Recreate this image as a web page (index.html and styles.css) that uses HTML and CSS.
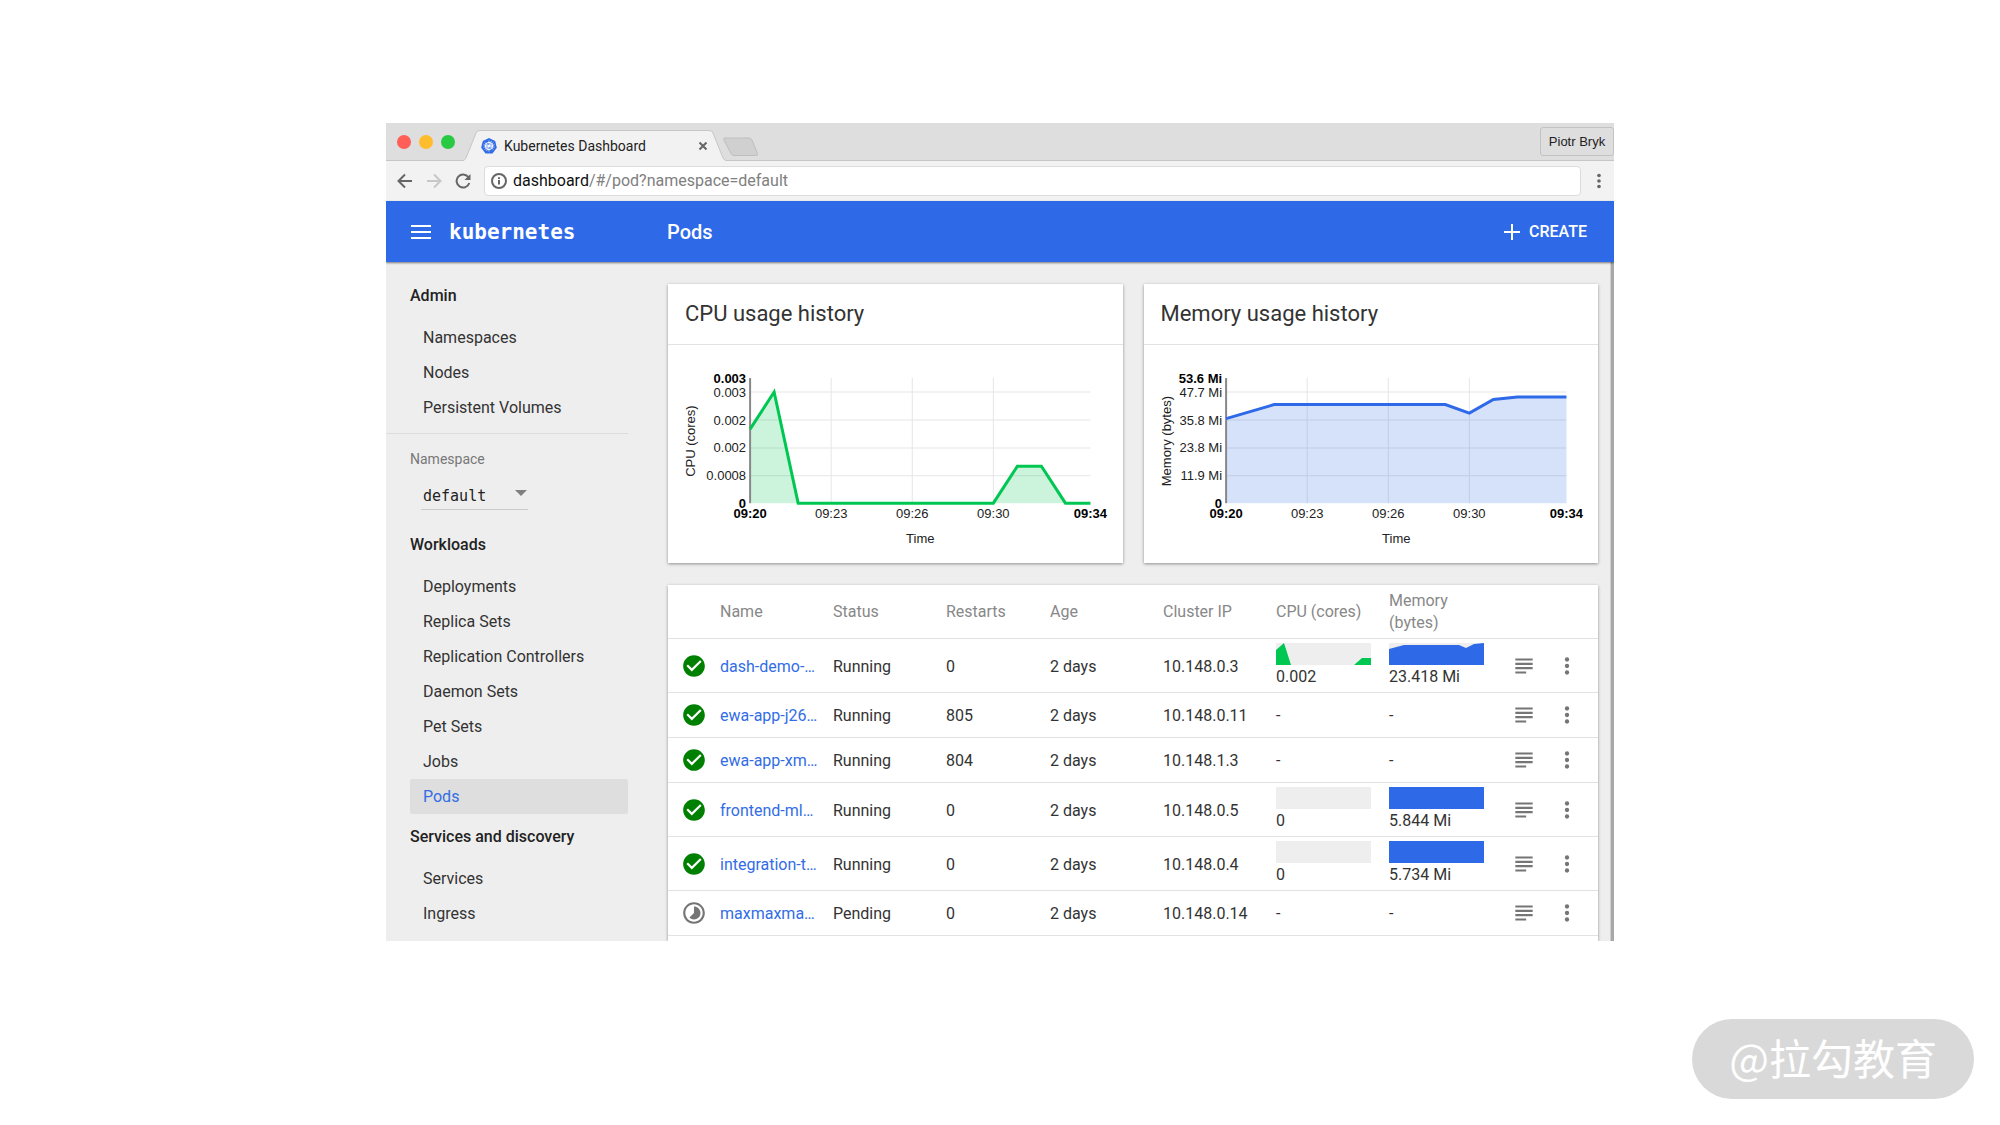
FILE: index.html
```html
<!DOCTYPE html>
<html lang="en">
<head>
<meta charset="utf-8">
<title>Kubernetes Dashboard</title>
<link rel="stylesheet" href="styles.css">
</head>
<body>
<svg class="sprite" aria-hidden="true">
  <symbol id="ok" viewBox="0 0 24 24"><path d="M12 2C6.48 2 2 6.48 2 12s4.48 10 10 10 10-4.48 10-10S17.52 2 12 2zm-2 15l-5-5 1.41-1.41L10 14.17l7.59-7.59L19 8l-9 9z"/></symbol>
  <symbol id="pending" viewBox="0 0 24 24"><path d="M16.24 7.76C15.07 6.59 13.54 6 12 6v6l-4.24 4.24c2.34 2.34 6.14 2.34 8.49 0 2.34-2.34 2.34-6.14-.01-8.48zM12 2C6.48 2 2 6.48 2 12s4.48 10 10 10 10-4.48 10-10S17.52 2 12 2zm0 18c-4.42 0-8-3.58-8-8s3.58-8 8-8 8 3.58 8 8-3.58 8-8 8z"/></symbol>
  <symbol id="logs" viewBox="0 0 24 24"><path d="M14 17H4v2h10v-2zm6-8H4v2h16V9zM4 15h16v-2H4v2zM4 5v2h16V5H4z"/></symbol>
  <symbol id="more" viewBox="0 0 24 24"><circle cx="12" cy="6" r="2"/><circle cx="12" cy="12" r="2"/><circle cx="12" cy="18" r="2"/></symbol>
</svg>
<div class="page">
  <div class="browser">
    <div class="tabstrip">
      <div class="lights"><span class="light close"></span><span class="light minimize"></span><span class="light maximize"></span></div>
      <div class="tab">
        <svg class="tab-shape" viewBox="0 0 263 31" preserveAspectRatio="none" aria-hidden="true"><path d="M0 30.5 Q2 30 3 28 L13 3 Q14 .5 17 .5 H246 Q249 .5 250 3 L260 28 Q261 30 263 30.5 V31 H0z" fill="#f2f2f2"/><path d="M0 30.5 Q2 30 3 28 L13 3 Q14 .5 17 .5 H246 Q249 .5 250 3 L260 28 Q261 30 263 30.5" fill="none" stroke="#c6c6c6"/></svg>
        <svg class="favicon" viewBox="0 0 16 16" aria-hidden="true"><path d="M8 0l6.2 3 1.6 6.7L11.5 15.400h-7L.2 9.700 1.800 3z" fill="#326de6"/><g fill="none" stroke="#fff"><circle cx="8" cy="8" r="3.600"/><path d="M8 2.500v11M2.600 6.800l10.800 2.400M3.700 11.400l8.600-6.800M5.600 12.900l4.800-9.800M3.700 4.600l8.600 6.800M2.600 9.200l10.800-2.400" stroke-width=".7"/></g></svg>
        <span class="tab-title">Kubernetes Dashboard</span>
        <button class="tab-close" aria-label="Close tab"><svg viewBox="0 0 10 10"><path d="M1.500 1.500l7 7M8.500 1.500l-7 7"/></svg></button>
      </div>
      <button class="new-tab" aria-label="New tab"><svg viewBox="0 0 37 20"><path d="M3 1h24q2 0 3 2l5.500 13.500q1 2-1.500 2H12q-2 0-3-2L2 3q-1-2 1-2z"/></svg></button>
      <button class="profile">Piotr Bryk</button>
    </div>
    <div class="toolbar">
      <button class="nav-btn" aria-label="Back"><svg viewBox="0 0 16 16"><path d="M15 8H2M8 1.500L1.500 8 8 14.500"/></svg></button>
      <button class="nav-btn disabled" aria-label="Forward"><svg viewBox="0 0 16 16"><path d="M1 8h13M8 1.500L14.500 8 8 14.500"/></svg></button>
      <button class="nav-btn" aria-label="Reload"><svg viewBox="0 0 16 16"><path d="M13.400 4.200A6.500 6.500 0 1 0 14.300 10"/><path d="M15.500 1v6h-6z" class="solid"/></svg></button>
      <div class="omnibox">
        <svg class="info" viewBox="0 0 16 16" aria-hidden="true"><circle cx="8" cy="8" r="7"/><path d="M8 7v4.500M8 4.300v1.700"/></svg>
        <label for="url">dashboard</label><input id="url" type="text" value="/#/pod?namespace=default">
      </div>
      <button class="menu-btn" aria-label="Browser menu"><svg viewBox="0 0 24 24"><use href="#more"/></svg></button>
    </div>
    <header class="appbar">
      <button class="burger" aria-label="Menu"><svg viewBox="0 0 20 16"><path d="M0 2h20M0 8h20M0 14h20"/></svg></button>
      <a class="brand" href="#">kubernetes</a>
      <h1>Pods</h1>
      <button class="create"><svg viewBox="0 0 16 16" aria-hidden="true"><path d="M8 0v16M0 8h16"/></svg>CREATE</button>
    </header>
    <div class="content">
      <nav class="sidebar">
        <h2>Admin</h2>
        <a href="#">Namespaces</a>
        <a href="#">Nodes</a>
        <a href="#">Persistent Volumes</a>
        <div class="namespace">
          <label for="ns">Namespace</label>
          <div class="select">
            <select id="ns"><option>default</option></select>
            <svg viewBox="0 0 12 6" aria-hidden="true"><path d="M0 0h12L6 6z"/></svg>
          </div>
        </div>
        <h2>Workloads</h2>
        <a href="#">Deployments</a>
        <a href="#">Replica Sets</a>
        <a href="#">Replication Controllers</a>
        <a href="#">Daemon Sets</a>
        <a href="#">Pet Sets</a>
        <a href="#">Jobs</a>
        <a href="#" class="active">Pods</a>
        <h2>Services and discovery</h2>
        <a href="#">Services</a>
        <a href="#">Ingress</a>
      </nav>
      <main>
        <div class="charts">
          <section class="card">
            <h3>CPU usage history</h3>
            <svg class="chart" viewBox="0 0 454 218" role="img" aria-label="CPU usage history">
              <path class="grid" d="M82 47H422M82 75H422M82 103H422M82 130.500H422M163 33V158M244 33V158M325 33V158"/>
              <path class="area cpu" d="M82 158V84L106 47 130 158H325L349 121H373L397 158z"/>
              <path class="axis" d="M82 33V158"/>
              <path class="line cpu" d="M82 84L106 47 130 158H325L349 121H373L397 158H422"/>
              <g class="end"><text x="78" y="38" class="b">0.003</text><text x="78" y="52">0.003</text><text x="78" y="80">0.002</text><text x="78" y="107">0.002</text><text x="78" y="135">0.0008</text><text x="78" y="163" class="b">0</text></g>
              <g class="mid"><text x="82" y="173" class="b">09:20</text><text x="163" y="173">09:23</text><text x="244" y="173">09:26</text><text x="325" y="173">09:30</text><text x="422" y="173" class="b">09:34</text><text x="252" y="198">Time</text><text transform="translate(27 96) rotate(-90)">CPU (cores)</text></g>
            </svg>
          </section>
          <section class="card">
            <h3>Memory usage history</h3>
            <svg class="chart" viewBox="0 0 454 218" role="img" aria-label="Memory usage history">
              <path class="grid" d="M82 47H422M82 75H422M82 103H422M82 130.500H422M163 33V158M244 33V158M325 33V158"/>
              <path class="area mem" d="M82 73.500L130 59.500H301L325 68 349 54.500 373 52H422V158H82z"/>
              <path class="axis" d="M82 33V158"/>
              <path class="line mem" d="M82 73.500L130 59.500H301L325 68 349 54.500 373 52H422"/>
              <g class="end"><text x="78" y="38" class="b">53.6 Mi</text><text x="78" y="52">47.7 Mi</text><text x="78" y="80">35.8 Mi</text><text x="78" y="107">23.8 Mi</text><text x="78" y="135">11.9 Mi</text><text x="78" y="163" class="b">0</text></g>
              <g class="mid"><text x="82" y="173" class="b">09:20</text><text x="163" y="173">09:23</text><text x="244" y="173">09:26</text><text x="325" y="173">09:30</text><text x="422" y="173" class="b">09:34</text><text x="252" y="198">Time</text><text transform="translate(27 96) rotate(-90)">Memory (bytes)</text></g>
            </svg>
          </section>
        </div>
        <section class="card pods">
          <table>
            <colgroup><col class="c-icon"><col class="c"><col class="c"><col class="c-restarts"><col class="c"><col class="c"><col class="c"><col class="c"><col class="c-logs"><col></colgroup>
            <thead><tr><th></th><th>Name</th><th>Status</th><th>Restarts</th><th>Age</th><th>Cluster IP</th><th>CPU (cores)</th><th>Memory (bytes)</th><th></th><th></th></tr></thead>
            <tbody>
              <tr><td class="state"><svg class="ok"><use href="#ok"/></svg></td><td><a href="#">dash-demo-…</a></td><td>Running</td><td>0</td><td>2 days</td><td>10.148.0.3</td>
                <td class="metric"><svg class="spark" viewBox="0 0 95 22" preserveAspectRatio="none"><path class="cpu" d="M0 22V7L8 0 15 22zM78 22L86 15H95V22z"/></svg>0.002</td>
                <td class="metric"><svg class="spark" viewBox="0 0 95 22" preserveAspectRatio="none"><path class="mem" d="M0 22V6L15 2H70L77 5 85 1 95 0V22z"/></svg>23.418 Mi</td>
                <td class="act"><button aria-label="Logs"><svg><use href="#logs"/></svg></button></td><td class="act last"><button aria-label="Actions"><svg><use href="#more"/></svg></button></td></tr>
              <tr><td class="state"><svg class="ok"><use href="#ok"/></svg></td><td><a href="#">ewa-app-j26…</a></td><td>Running</td><td>805</td><td>2 days</td><td>10.148.0.11</td><td>-</td><td>-</td>
                <td class="act"><button aria-label="Logs"><svg><use href="#logs"/></svg></button></td><td class="act last"><button aria-label="Actions"><svg><use href="#more"/></svg></button></td></tr>
              <tr><td class="state"><svg class="ok"><use href="#ok"/></svg></td><td><a href="#">ewa-app-xm…</a></td><td>Running</td><td>804</td><td>2 days</td><td>10.148.1.3</td><td>-</td><td>-</td>
                <td class="act"><button aria-label="Logs"><svg><use href="#logs"/></svg></button></td><td class="act last"><button aria-label="Actions"><svg><use href="#more"/></svg></button></td></tr>
              <tr><td class="state"><svg class="ok"><use href="#ok"/></svg></td><td><a href="#">frontend-ml…</a></td><td>Running</td><td>0</td><td>2 days</td><td>10.148.0.5</td>
                <td class="metric"><svg class="spark"></svg>0</td>
                <td class="metric"><svg class="spark full"></svg>5.844 Mi</td>
                <td class="act"><button aria-label="Logs"><svg><use href="#logs"/></svg></button></td><td class="act last"><button aria-label="Actions"><svg><use href="#more"/></svg></button></td></tr>
              <tr><td class="state"><svg class="ok"><use href="#ok"/></svg></td><td><a href="#">integration-t…</a></td><td>Running</td><td>0</td><td>2 days</td><td>10.148.0.4</td>
                <td class="metric"><svg class="spark"></svg>0</td>
                <td class="metric"><svg class="spark full"></svg>5.734 Mi</td>
                <td class="act"><button aria-label="Logs"><svg><use href="#logs"/></svg></button></td><td class="act last"><button aria-label="Actions"><svg><use href="#more"/></svg></button></td></tr>
              <tr><td class="state"><svg><use href="#pending"/></svg></td><td><a href="#">maxmaxma…</a></td><td>Pending</td><td>0</td><td>2 days</td><td>10.148.0.14</td><td>-</td><td>-</td>
                <td class="act"><button aria-label="Logs"><svg><use href="#logs"/></svg></button></td><td class="act last"><button aria-label="Actions"><svg><use href="#more"/></svg></button></td></tr>
            </tbody>
          </table>
        </section>
      </main>
      <div class="scrollbar"></div>
    </div>
  </div>
  <div class="watermark">@拉勾教育</div>
</div>
</body>
</html>
```
FILE: styles.css
```css
* { box-sizing: border-box; }

body {
  margin: 0;
  background: #fff;
  color: #333;
  font: 16px/22px Roboto, "Liberation Sans", sans-serif;
}

button {
  display: flex;
  align-items: center;
  justify-content: center;
  margin: 0;
  padding: 0;
  border: 0;
  background: none;
  color: inherit;
  font: inherit;
}

a { color: inherit; text-decoration: none; }
h1, h2, h3 { margin: 0; }
svg { display: block; }
.sprite { position: absolute; width: 0; height: 0; }

.page {
  display: flex;
  flex-direction: column;
  min-height: 100vh;
  padding: 123px 26px 26px;
}

.browser {
  width: 100%;
  max-width: 1228px;
  margin: 0 auto;
  background: #eee;
  overflow: hidden;
}

/* Browser chrome */
.tabstrip {
  display: flex;
  align-items: center;
  height: 38px;
  padding-left: 11px;
  background: #dedede;
  border-bottom: 1px solid #c6c6c6;
}

.lights { display: flex; gap: 8px; margin-right: 8px; }
.light { width: 14px; height: 14px; border-radius: 50%; }
.close { background: #ff5f57; }
.minimize { background: #ffbd2e; }
.maximize { background: #28ca41; }

.tab {
  position: relative;
  display: flex;
  align-items: center;
  align-self: flex-end;
  width: 263px;
  height: 31px;
  margin-bottom: -1px;
  padding: 0 18px;
}
.tab-shape { position: absolute; inset: 0; width: 100%; height: 100%; }
.favicon { position: relative; width: 16px; height: 16px; }
.tab-title {
  position: relative;
  flex: 1;
  margin-left: 7px;
  color: #222;
  font-size: 14px;
}
.tab-close { position: relative; }
.tab-close svg { width: 10px; height: 10px; fill: none; stroke: #666; stroke-width: 2; }

.new-tab { margin-left: -4px; }
.new-tab svg { width: 37px; height: 20px; margin-top: 10px; fill: #d0d0d0; stroke: #bebebe; }

.profile {
  width: 74px;
  height: 29px;
  margin-left: auto;
  border: 1px solid #c2c2c2;
  border-radius: 3px;
  color: #222;
  font: 13px/20px "Liberation Sans", sans-serif;
}

.toolbar {
  display: flex;
  align-items: center;
  gap: 13px;
  height: 40px;
  padding-left: 11px;
  background: #f2f2f2;
}
.nav-btn svg { width: 16px; height: 16px; fill: none; stroke: #666; stroke-width: 2; }
.nav-btn .solid { fill: #666; stroke: none; }
.disabled { opacity: .3; }

.omnibox {
  display: flex;
  flex: 1;
  align-items: center;
  height: 30px;
  padding-left: 6px;
  border: 1px solid #dcdcdc;
  border-radius: 4px;
  background: #fff;
}
.omnibox label { margin-left: 6px; color: #111; }
.omnibox input {
  flex: 1;
  min-width: 0;
  padding: 0;
  border: 0;
  outline: 0;
  background: none;
  color: #808080;
  font: inherit;
}
.info { width: 16px; height: 16px; fill: none; stroke: #666; stroke-width: 2; }
.menu-btn svg { width: 22px; height: 22px; margin: 0 4px 0 -6px; fill: #666; }

/* Application bar */
.appbar {
  position: relative;
  display: flex;
  align-items: center;
  height: 61px;
  padding: 0 27px 0 25px;
  background: #2e69e8;
  box-shadow: 0 1px 2px rgba(0, 0, 0, .5);
  color: #fff;
}
.appbar svg { fill: none; stroke: #fff; stroke-width: 2; }
.burger svg { width: 20px; height: 16px; }
.brand {
  width: 218px;
  margin-left: 18px;
  font: bold 21px/24px "DejaVu Sans Mono", monospace;
}
.appbar h1 { font-size: 20px; font-weight: 500; }
.create { gap: 9px; margin-left: auto; font-weight: 500; }
.create svg { width: 16px; height: 16px; }

.content { display: flex; }

/* Navigation */
.sidebar { flex: 0 0 242px; padding: 11px 0 10px; }
.sidebar h2 {
  margin: 12px 0 13px 24px;
  color: #222;
  font-size: 16px;
  font-weight: 500;
}
.sidebar > a {
  display: block;
  margin-left: 24px;
  padding: 7px 0 6px 13px;
  border-radius: 2px;
}
.sidebar > .active { background: #dedede; color: #326de6; }

.namespace {
  margin: 8px 0 24px;
  padding: 14px 0 0 24px;
  border-top: 1px solid #dcdcdc;
}
.namespace label { display: block; color: #777; font-size: 14px; }
.select { position: relative; width: 107px; margin: 11px 0 0 11px; }
.select select {
  display: block;
  width: 100%;
  height: 29px;
  padding: 2px 0 0 2px;
  border: 0;
  border-bottom: 1px solid #ccc;
  appearance: none;
  background: none;
  color: #222;
  font: 15px/22px "DejaVu Sans Mono", monospace;
}
.select svg { position: absolute; top: 9px; right: 1px; width: 12px; height: 6px; fill: #808080; }

/* Main column */
main { flex: 1; min-width: 0; padding: 22px 12px 0 40px; }
.charts { display: grid; grid-template-columns: 1fr 1fr; gap: 21px; margin-bottom: 22px; }
.card { background: #fff; box-shadow: 0 1px 3px rgba(0, 0, 0, .4); }
.card h3 {
  padding: 19px 17px;
  border-bottom: 1px solid #e2e2e2;
  font-size: 22px;
  font-weight: 400;
}

.chart { width: 100%; height: auto; }
.chart path { fill: none; }
.chart .grid { stroke: #e6e6e6; stroke-width: 1; }
.chart .axis { stroke: #888; stroke-width: 2; }
.chart .line { stroke-width: 3; }
.chart .line.cpu { stroke: #00c752; }
.chart .line.mem { stroke: #2e69e8; }
.chart .area { fill-opacity: .2; }
.chart .area.cpu { fill: #00c752; }
.chart .area.mem { fill: #326de6; }
.chart text { font: 13px "Liberation Sans", sans-serif; fill: #222; }
.chart .b { font-weight: bold; fill: #000; }
.end { text-anchor: end; }
.mid { text-anchor: middle; }

/* Pod list */
.pods { padding-bottom: 5px; }
table { width: 100%; border-collapse: separate; border-spacing: 0; table-layout: fixed; }
.c-icon { width: 52px; }
.c { width: 113px; }
.c-restarts { width: 104px; }
.c-logs { width: 44px; }

th, td {
  padding: 12px 18px 10px 0;
  border-bottom: 1px solid #e2e2e2;
  text-align: left;
  font-weight: 400;
}
th { padding: 5px 18px 4px 0; color: #888; }
td a { color: #326de6; white-space: nowrap; }
.metric { padding: 4px 18px 4px 0; }
.spark { width: 100%; height: 22px; margin-bottom: 1px; background: #eee; }
.spark.full { background: #2e69e8; }
.spark .cpu { fill: #00c752; }
.spark .mem { fill: #2e69e8; }

.state, .act { padding: 0; }
.state svg { width: 26px; height: 26px; margin: 0 auto; fill: #757575; }
.state .ok { fill: #008000; }
.act button { width: 100%; }
.act svg { width: 26px; height: 26px; fill: #757575; }
.act.last { padding-right: 10px; }

.scrollbar { width: 4px; background: #a8a8a8; border-left: 1px solid #d0d0d0; }

.watermark {
  align-self: flex-end;
  margin-top: auto;
  padding: 0 37px 4px;
  border-radius: 40px;
  background: #d9d9d9;
  color: #fff;
  font: 42px/76px "Noto Sans CJK SC", sans-serif;
}
```
